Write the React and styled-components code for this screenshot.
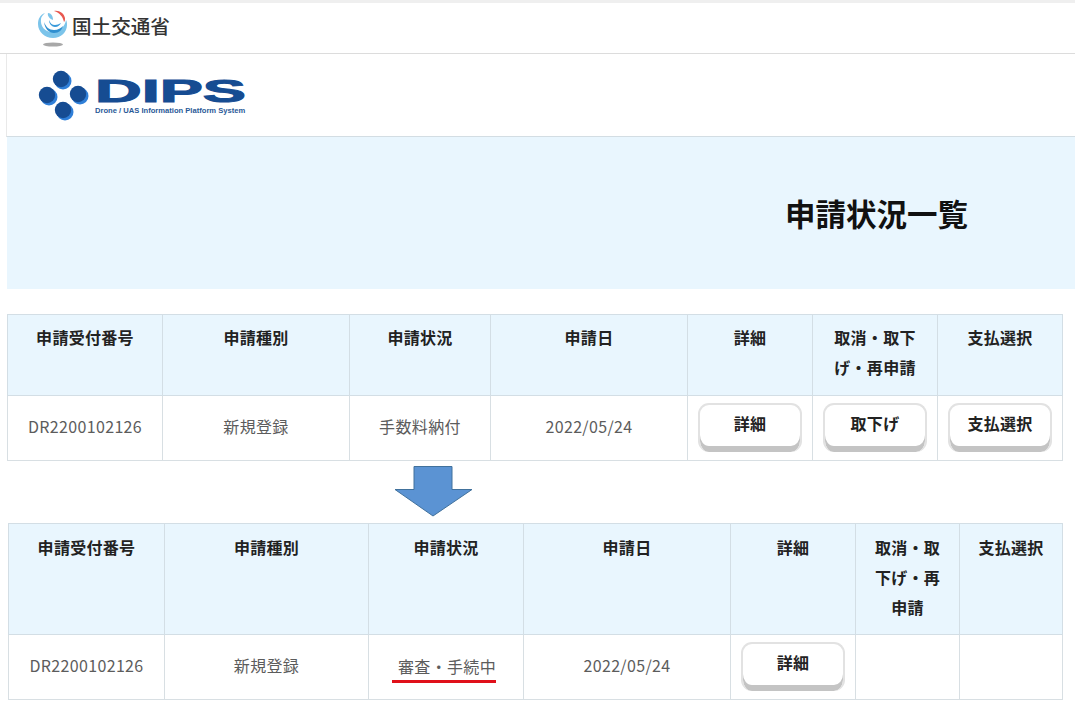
import React from 'react'
import styled, { createGlobalStyle } from 'styled-components'

const GlobalStyle = createGlobalStyle`
  html, body {
    margin: 0;
    padding: 0;
    background: #fff;
    font-family: "Noto Sans CJK JP", "Liberation Sans", sans-serif;
  }
`

const Page = styled.div`
  width: 1075px;
  height: 715px;
  overflow: hidden;
  background: #fff;
`

const TopStrip = styled.div`
  height: 3px;
  background: #efefef;
`

const MinistryBar = styled.header`
  height: 51px;
  box-sizing: border-box;
  display: flex;
  align-items: flex-start;
  gap: 3px;
  padding: 5px 0 0 37px;
  border-bottom: 1px solid #dcdcdc;
`

const MinistryName = styled.span`
  font-size: 19.6px;
  line-height: 35px;
  font-weight: 500;
  color: #333;
`

const LogoBar = styled.div`
  height: 83px;
  box-sizing: border-box;
  margin-left: 6px;
  display: flex;
  align-items: flex-start;
  gap: 4px;
  padding: 15px 0 0 30px;
  border-left: 1px solid #e9e9e9;
  border-bottom: 1px solid #d3dde3;
`

const Wordmark = styled.div`
  display: flex;
  flex-direction: column;
  padding-top: 9px;
`

const WordmarkTitle = styled.span`
  display: block;
  width: 148px;
  height: 28px;
  font-family: "Liberation Sans", sans-serif;
  font-size: 30.5px;
  line-height: 26px;
  font-weight: 700;
  color: #164c92;
  -webkit-text-stroke: 1px #164c92;
  transform: scaleX(2.12);
  transform-origin: left center;
  white-space: nowrap;
`

const WordmarkSub = styled.span`
  font-family: "Liberation Sans", sans-serif;
  font-size: 7.6px;
  line-height: 9px;
  font-weight: 700;
  color: #2a5a98;
  white-space: nowrap;
`

const Banner = styled.div`
  height: 152px;
  margin-left: 7px;
  box-sizing: border-box;
  padding-left: 778px;
  display: flex;
  align-items: center;
  background: #e9f6fe;
`

const Title = styled.h1`
  margin: 0;
  font-size: 30.5px;
  line-height: 50px;
  font-weight: 700;
  color: #111;
`

const Table = styled.table`
  margin-left: ${p => p.$left}px;
  width: ${p => p.$width}px;
  table-layout: fixed;
  border-collapse: collapse;
`

const HeadCell = styled.th`
  box-sizing: border-box;
  height: ${p => p.$height}px;
  padding: ${p => p.$top}px 14px 0;
  vertical-align: top;
  text-align: center;
  font-size: 16px;
  line-height: 30px;
  letter-spacing: 0.3px;
  font-weight: 700;
  color: #222;
  background: #e9f6fe;
  border: 1px solid #d3dee5;
  border-left-color: ${p => (p.$strong ? '#bcc6cc' : '#d3dee5')};
`

const Cell = styled.td`
  box-sizing: border-box;
  height: 65px;
  padding: 0 0 4px;
  text-align: center;
  font-size: 16px;
  letter-spacing: 0.35px;
  color: #5c5c5c;
  border: 1px solid #d8dfe3;
  border-left-color: ${p => (p.$strong ? '#bcc6cc' : '#d8dfe3')};
`

const ActionButton = styled.button`
  display: block;
  width: 104px;
  height: 49px;
  margin: 3px auto 0;
  padding: 0 0 12px;
  box-sizing: border-box;
  font-family: inherit;
  font-size: 16px;
  letter-spacing: 0.3px;
  font-weight: 700;
  color: #222;
  background: #fff;
  border: 2px solid #e2e2e2;
  border-bottom: 0;
  border-radius: 11px;
  box-shadow: inset 0 -6px 0 #c4c4c4;
`

const ArrowRow = styled.div`
  height: 62px;
  padding: 5px 0 0 393px;
  box-sizing: border-box;
`

const Marked = styled.span`
  display: inline-block;
  margin-right: 4px;
  padding: 6px 0 2px 6px;
  line-height: 24px;
  border-bottom: 3px solid #e0101a;
`

const TableGap = styled.div`
  height: 25px;
`

const FIRST_WIDTHS = [155, 187, 141, 197, 125, 125, 125]
const SECOND_WIDTHS = [156, 204, 155, 207, 125, 104, 103]
const HEADERS = ['申請受付番号', '申請種別', '申請状況', '申請日', '詳細', '取消・取下げ・再申請', '支払選択']

const MlitLogo = () => (
  <svg width="32" height="42" viewBox="0 0 32 42">
    <path d="M8 5C3 7 1 11 1 16c0 8 7 14 15 14s14-6 14-13c0-2 0-3-1-5-1 7-7 12-14 12C8 24 3 18 4 11c0-2 2-4 4-6z" fill="#7cc4ea" />
    <path d="M7 14c1 7 5 11 10 11s8-3 9-7c-2 2-5 4-9 4-5 0-8-3-10-8z" fill="#2f8fd0" />
    <path d="M12 12c0 4 3 7 6 7s5-2 6-4c-2 1-4 2-6 2-3 0-5-2-6-5z" fill="#3a9ada" />
    <path d="M11 5c3 0 5 3 5 7-3-1-6-4-5-7z" fill="#7cc4ea" />
    <path d="M17 3c5-1 10 2 11 7 0 2 0 3-1 4-1-5-4-9-10-11z" fill="#e8584f" />
    <ellipse cx="16" cy="36.5" rx="10" ry="2" fill="#a8a8a8" />
  </svg>
)

const DipsMark = () => (
  <svg width="54" height="52" viewBox="0 0 54 52">
    {[[24, 10], [10, 26], [41, 25], [26, 41]].map(([x, y]) => (
      <g key={`${x}-${y}`}>
        <circle cx={x + 2} cy={y + 2} r="8.5" fill="#2f7fd8" />
        <circle cx={x} cy={y} r="8.2" fill="#164c92" />
      </g>
    ))}
  </svg>
)

const DownArrow = () => (
  <svg width="80" height="52" viewBox="0 0 80 52">
    <path d="M21 0.5h38v23h20L40 50 2 23.5h19z" fill="#5b93d3" stroke="#41719c" strokeWidth="1" />
  </svg>
)

const StatusTable = ({ widths, left, width, headHeight, headTop, strongColumn, children }) => (
  <Table $left={left} $width={width}>
    <colgroup>
      {widths.map((w, i) => <col key={i} style={{ width: w }} />)}
    </colgroup>
    <thead>
      <tr>
        {HEADERS.map((h, i) => (
          <HeadCell key={h} $height={headHeight} $top={headTop} $strong={i === strongColumn}>{h}</HeadCell>
        ))}
      </tr>
    </thead>
    <tbody>
      <tr>{children}</tr>
    </tbody>
  </Table>
)

export default function App() {
  return (
    <Page>
      <GlobalStyle />
      <TopStrip />
      <MinistryBar>
        <MlitLogo />
        <MinistryName>国土交通省</MinistryName>
      </MinistryBar>
      <LogoBar>
        <DipsMark />
        <Wordmark>
          <WordmarkTitle>DIPS</WordmarkTitle>
          <WordmarkSub>Drone / UAS Information Platform System</WordmarkSub>
        </Wordmark>
      </LogoBar>
      <Banner>
        <Title>申請状況一覧</Title>
      </Banner>
      <TableGap />
      <StatusTable widths={FIRST_WIDTHS} left={7} width={1055} headHeight={81} headTop={7}>
        <Cell>DR2200102126</Cell>
        <Cell>新規登録</Cell>
        <Cell>手数料納付</Cell>
        <Cell>2022/05/24</Cell>
        <Cell><ActionButton>詳細</ActionButton></Cell>
        <Cell><ActionButton>取下げ</ActionButton></Cell>
        <Cell><ActionButton>支払選択</ActionButton></Cell>
      </StatusTable>
      <ArrowRow><DownArrow /></ArrowRow>
      <StatusTable widths={SECOND_WIDTHS} left={8} width={1054} headHeight={111} headTop={8} strongColumn={2}>
        <Cell>DR2200102126</Cell>
        <Cell>新規登録</Cell>
        <Cell $strong><Marked>審査・手続中</Marked></Cell>
        <Cell>2022/05/24</Cell>
        <Cell><ActionButton>詳細</ActionButton></Cell>
        <Cell />
        <Cell />
      </StatusTable>
    </Page>
  )
}
